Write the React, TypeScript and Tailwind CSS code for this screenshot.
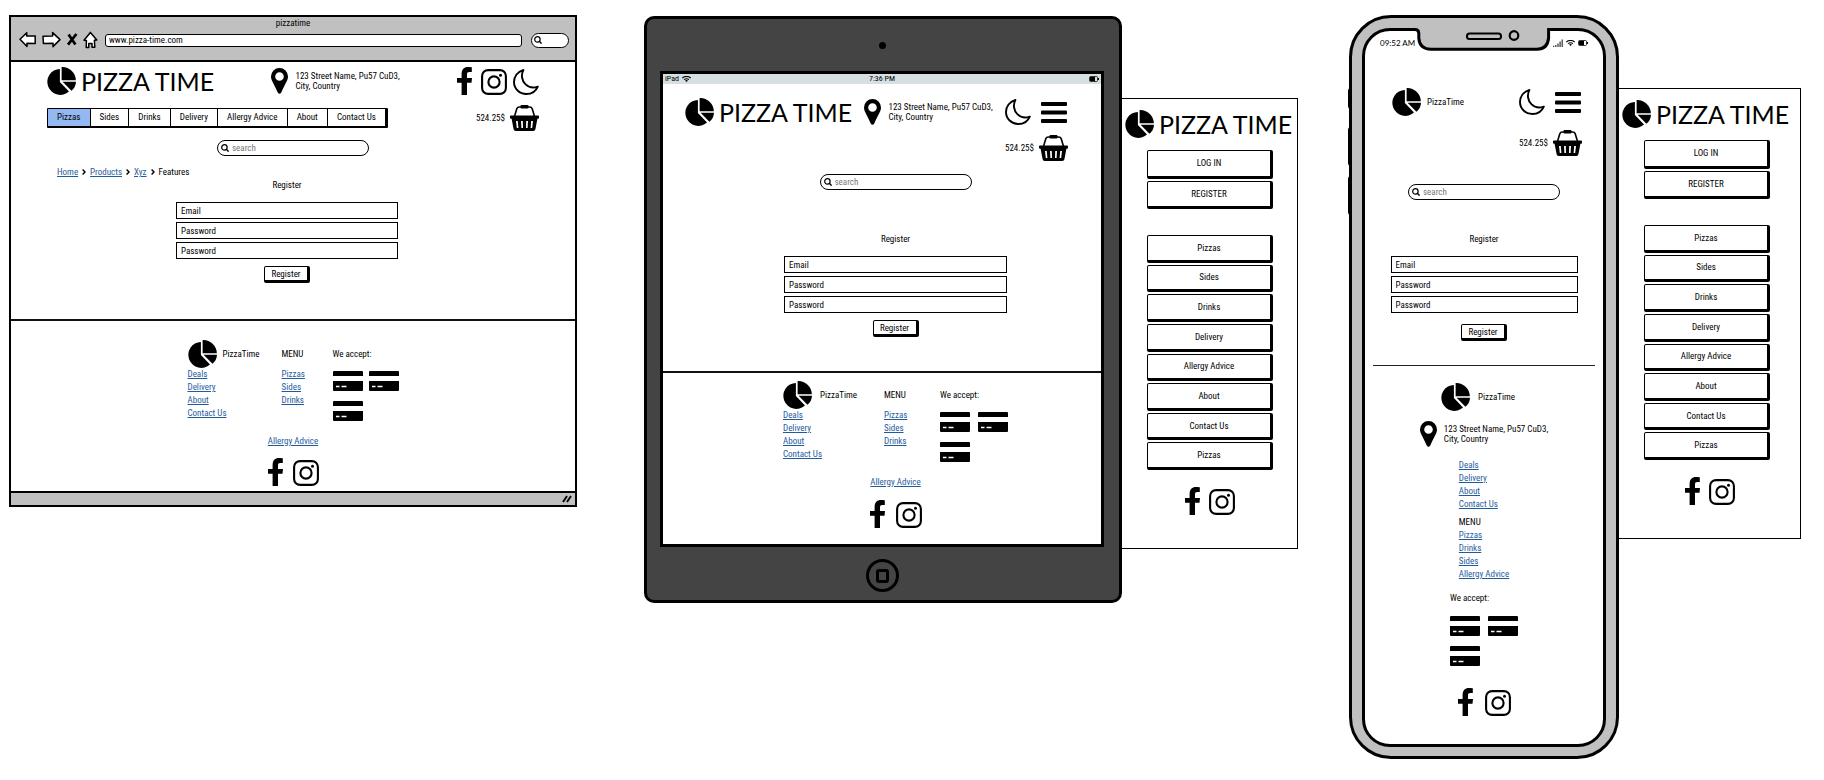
import React from "react";

type IconProps = { className?: string };

const PieIcon = ({ className = "" }: IconProps) => (
  <svg viewBox="0 0 29 28" className={`h-[28px] w-[29px] shrink-0 ${className}`} aria-hidden="true">
    <path d="M12.9 15V1.9A13 13 0 1 0 22 24.6Z" />
    <path d="M14.6 13.2V0A13.8 13.4 0 0 1 28.8 13.2Z" />
    <path d="M15.600 14.8H29A12 12 0 0 1 24.4 23.8Z" />
  </svg>
);

const PinIcon = () => (
  <svg viewBox="0 0 17 26" className="h-[26px] w-[17px] shrink-0" aria-hidden="true">
    <path
      fillRule="evenodd"
      d="M8.5 0A8.5 8.5 0 0 0 0 8.5C0 12.5 3 15.5 6.6 24.2Q8.5 27.4 10.4 24.2C14 15.5 17 12.5 17 8.5A8.5 8.5 0 0 0 8.5 0ZM8.5 4.2A4.3 4.3 0 1 1 8.5 12.8A4.3 4.3 0 1 1 8.5 4.2Z"
    />
  </svg>
);

const FacebookIcon = () => (
  <svg viewBox="0 0 15 28" className="h-[28px] w-[15px] shrink-0" aria-hidden="true">
    <path d="M4.6 28V15.8H0V11H4.6V7.2C4.6 2.4 7 .1 11 .1Q13.6 0 14.8.3V5H12.4C10.4 5 10 5.8 10 7.6V11H15L14.5 15.8H10V28Z" />
  </svg>
);

const InstagramIcon = () => (
  <svg viewBox="0 0 26 26" className="h-[26px] w-[26px] shrink-0" aria-hidden="true">
    <rect x="1.1" y="1.1" width="23.8" height="23.8" rx="6" fill="none" stroke="black" strokeWidth="2.1" />
    <circle cx="13" cy="13" r="5.6" fill="none" stroke="black" strokeWidth="2.1" />
    <circle cx="19.5" cy="6.3" r="1.5" />
  </svg>
);

const MoonIcon = () => (
  <svg viewBox="0 0 26 26" className="h-[26px] w-[26px] shrink-0" aria-hidden="true">
    <path
      d="M10.4 1C4.6 2.8 1 7.6 1 13C1 19.8 6.5 25 13.4 25C18.6 25 22.8 22.4 24.8 17.6C20.6 19.2 16 18.6 12.6 15.4C8.6 11.6 7.9 5.6 10.4 1Z"
      fill="none"
      stroke="black"
      strokeWidth="1.9"
      strokeLinejoin="round"
    />
  </svg>
);

const BasketIcon = () => (
  <svg viewBox="0 0 29 26" className="h-[26px] w-[29px] shrink-0" aria-hidden="true">
    <path d="M4.6 11L6.8 3.8Q7.4 2 9.4 2H19.6Q21.6 2 22.2 3.8L24.4 11" fill="none" stroke="black" strokeWidth="1.6" />
    <rect x="10.5" y="0" width="8" height="3.4" rx="1" />
    <path
      fillRule="evenodd"
      d="M.8 10.6H28.2Q29 10.6 29 11.6V12.6Q29 13.8 28 13.8H27.4L25.4 24.2Q25 26 23.4 26H5.6Q4 26 3.6 24.2L1.6 13.8H1Q0 13.8 0 12.6V11.6Q0 10.6 .8 10.6ZM6 16L6.8 23H8.4L7.8 16ZM11 16L11.4 23H13L12.8 16ZM16.2 16L16 23H17.6L18 16ZM21.2 16L20.6 23H22.2L23 16Z"
    />
  </svg>
);

const MenuIcon = () => (
  <svg viewBox="0 0 26 21" className="h-[21px] w-[26px] shrink-0" aria-hidden="true">
    <rect width="26" height="4" rx="1" />
    <rect y="8.5" width="26" height="4" rx="1" />
    <rect y="17" width="26" height="4" rx="1" />
  </svg>
);

const SearchIcon = ({ className = "" }: IconProps) => (
  <svg viewBox="0 0 8 8" className={`h-[8px] w-[8px] shrink-0 ${className}`} aria-hidden="true">
    <circle cx="3.4" cy="3.4" r="2.7" fill="none" stroke="black" strokeWidth="1.2" />
    <path d="M5.3 5.3L7.6 7.6" stroke="black" strokeWidth="1.4" />
  </svg>
);

const CardIcon = () => (
  <svg viewBox="0 0 30 20" className="h-[20px] w-[30px] shrink-0" aria-hidden="true">
    <path d="M1 0H29Q30 0 30 1V5H0V1Q0 0 1 0Z" />
    <path d="M0 10H30V19Q30 20 29 20H1Q0 20 0 19Z" />
    <path d="M3 15.5H6.5M8.5 15.5H13.5" stroke="white" strokeWidth="1.3" />
  </svg>
);

const WifiIcon = ({ className = "" }: IconProps) => (
  <svg viewBox="0 0 9 6" className={`h-[6px] w-[9px] ${className}`} aria-hidden="true">
    <path d="M.3 2Q4.5-1.2 8.7 2M2 3.6Q4.5 1.8 7 3.6" fill="none" stroke="black" strokeWidth="1.1" />
    <path d="M3 4.4Q4.5 3.6 6 4.4L4.5 6Z" />
  </svg>
);

const BatteryIcon = () => (
  <svg viewBox="0 0 10 6" className="h-[6px] w-[10px]" aria-hidden="true">
    <rect x=".5" y=".5" width="8" height="5" rx="1" fill="none" stroke="#222" strokeWidth=".9" />
    <rect x="1" y="1" width="5" height="4" />
    <rect x="9" y="2" width="1" height="2" />
  </svg>
);

const SignalIcon = () => (
  <svg viewBox="0 0 10 8" className="h-[8px] w-[10px]" aria-hidden="true">
    <path d="M.6 8V6.8M2.8 8V6M5 8V4.4M7.1 8V2.6M9.2 8V.4" stroke="#444" strokeWidth="1.3" />
  </svg>
);

const Wordmark = () => (
  <div className="flex items-center gap-[5px]">
    <PieIcon />
    <span className="whitespace-nowrap font-[Lato,sans-serif] text-[25px] leading-[28px]">PIZZA TIME</span>
  </div>
);

const SmallLogo = ({ className = "gap-[8px]" }: IconProps) => (
  <div className={`flex h-[28px] items-center ${className}`}>
    <PieIcon />
    <span>PizzaTime</span>
  </div>
);

const Address = () => (
  <address className="flex items-center gap-[7px] not-italic">
    <PinIcon />
    <span className="whitespace-nowrap leading-[10px]">
      123 Street Name, Pu57 CuD3,
      <br />
      City, Country
    </span>
  </address>
);

const Cart = () => (
  <div className="flex items-center gap-[5px]">
    <span>524.25$</span>
    <button type="button" aria-label="Basket">
      <BasketIcon />
    </button>
  </div>
);

const IconButton = ({ label, children }: { label: string; children: React.ReactNode }) => (
  <button type="button" aria-label={label}>
    {children}
  </button>
);

const Social = ({ className = "gap-[10px]" }: IconProps) => (
  <div className={`flex h-[28px] items-end justify-center ${className}`}>
    <a href="#facebook" aria-label="Facebook">
      <FacebookIcon />
    </a>
    <a href="#instagram" aria-label="Instagram">
      <InstagramIcon />
    </a>
  </div>
);

const SearchBox = ({ className = "" }: IconProps) => (
  <label
    className={`mx-auto flex h-[16px] w-[152px] items-center gap-[3px] rounded-full border border-black pl-[3px] ${className}`}
  >
    <SearchIcon />
    <input
      type="search"
      aria-label="search"
      placeholder="search"
      className="h-[12px] w-full min-w-0 rounded-full bg-transparent outline-none placeholder:text-[#777]"
    />
  </label>
);

const fields = [
  { type: "email", name: "Email" },
  { type: "password", name: "Password" },
  { type: "password", name: "Password" },
];

const RegisterForm = ({ className = "", buttonClass = "mt-[7px]" }: { className?: string; buttonClass?: string }) => (
  <form className={`mx-auto flex flex-col items-center ${className}`}>
    <h2 className="mb-[11px]">Register</h2>
    <div className="flex w-full flex-col gap-[3px]">
      {fields.map((f, i) => (
        <input
          key={i}
          type={f.type}
          aria-label={f.name}
          placeholder={f.name}
          className="h-[17px] w-full border border-black bg-white px-[4px] outline-none placeholder:text-black"
        />
      ))}
    </div>
    <button
      type="button"
      className={`h-[17px] w-[46px] rounded-[2px] border border-r-[3px] border-b-[3px] border-black bg-white leading-[12px] ${buttonClass}`}
    >
      Register
    </button>
  </form>
);

const Links = ({ items }: { items: string[] }) => (
  <ul className="leading-[13px] text-[#1f5c9e]">
    {items.map((t) => (
      <li key={t}>
        <a href="#" className="underline">
          {t}
        </a>
      </li>
    ))}
  </ul>
);

const Cards = ({ className = "gap-x-[6px]" }: IconProps) => (
  <div className={`grid grid-cols-[30px_30px] gap-y-[10px] ${className}`}>
    <CardIcon />
    <CardIcon />
    <CardIcon />
  </div>
);

const companyLinks = ["Deals", "Delivery", "About", "Contact Us"];

const WideFooter = ({ columns, cardGap, logoGap }: { columns: string; cardGap: string; logoGap: string }) => (
  <>
    <div className={`mx-auto grid w-fit ${columns}`}>
      <div>
        <SmallLogo className={logoGap} />
        <Links items={companyLinks} />
      </div>
      <div>
        <h3 className="leading-[28px]">MENU</h3>
        <Links items={["Pizzas", "Sides", "Drinks"]} />
      </div>
      <div>
        <h3 className="mb-[3px] leading-[28px]">We accept:</h3>
        <Cards className={cardGap} />
      </div>
    </div>
    <p className="mt-[14px] text-center">
      <a href="#" className="text-[#1f5c9e] underline">
        Allergy Advice
      </a>
    </p>
  </>
);

const tabs = ["Pizzas", "Sides", "Drinks", "Delivery", "Allergy Advice", "About", "Contact Us"];

const DesktopWindow = () => (
  <section className="mt-[15px] ml-[9px] flex min-w-0 flex-[564_1_0%] flex-col border-2 border-black">
    <header className="border-b-2 border-black bg-[#c0c0c0] pb-[11px]">
      <p className="text-center">pizzatime</p>
      <div className="mt-[2px] flex h-[18px] items-center pr-[6px] pl-[8px]">
        <svg viewBox="0 0 82 18" className="h-[18px] w-[82px] shrink-0" aria-hidden="true">
          <g fill="white" stroke="black" strokeWidth="1.5" strokeLinejoin="round">
            <path d="M1 8.2L7.8 1.8L7.6 5H16.2V12.4L8 12.2V15.4Z" />
            <path d="M41 8.6L34 15.6V12.2L24.4 12.4L24 5.2L33.6 5V1.6Z" />
            <path d="M65 9.2L71.4 1.4L77.8 9L75.4 9.2L75.8 16.2H73V12.6H69.8V16.4H67.2L67.4 9.4Z" />
          </g>
          <path d="M49.6 3.4L56.4 13.4M57.4 3L49 13.6" stroke="black" strokeWidth="2.7" />
        </svg>
        <input
          aria-label="Address"
          defaultValue="www.pizza-time.com"
          className="ml-[4px] h-[13px] min-w-0 flex-1 rounded-[3px] border border-black bg-white px-[3px] outline-none"
        />
        <label className="ml-[9px] flex h-[15px] w-[38px] items-center rounded-[8px] border border-black bg-white pl-[2px]">
          <SearchIcon />
          <input aria-label="Browser search" className="w-full min-w-0 bg-transparent outline-none" />
        </label>
      </div>
    </header>
    <main className="pt-[5px] pb-[36px]">
      <div className="flex h-[28px] items-center justify-between px-[36px]">
        <Wordmark />
        <Address />
        <div className="flex items-end gap-[6px]">
          <Social className="gap-[9px]" />
          <IconButton label="Dark mode">
            <MoonIcon />
          </IconButton>
        </div>
      </div>
      <div className="mt-[10px] flex items-center justify-between px-[36px]">
        <nav className="flex h-[20px] w-[341px] rounded-[1px] border border-r-[3px] border-b-2 border-black text-center">
          {tabs.map((t, i) => (
            <a
              key={t}
              href="#"
              className={`flex-auto border-r border-black px-[8px] leading-[17px] whitespace-nowrap last:border-r-0 ${i === 0 ? "bg-[#94b9f2]" : "bg-white"}`}
            >
              {t}
            </a>
          ))}
        </nav>
        <Cart />
      </div>
      <SearchBox className="mt-[9px]" />
      <nav className="mt-[10px] flex items-center gap-[4px] pl-[46px]">
        {["Home", "Products", "Xyz"].map((t) => (
          <React.Fragment key={t}>
            <a href="#" className="text-[#1f5c9e] underline">
              {t}
            </a>
            <svg viewBox="0 0 4 6" className="h-[6px] w-[4px]" aria-hidden="true">
              <path d="M.6.5L3 3L.6 5.5" fill="none" stroke="black" strokeWidth="1.4" />
            </svg>
          </React.Fragment>
        ))}
        <span>Features</span>
      </nav>
      <div className="mt-px pr-[12px]">
        <RegisterForm className="w-[222px]" />
      </div>
    </main>
    <footer className="border-t-2 border-[#111] pt-[19px] pb-[5px]">
      <WideFooter columns="grid-cols-[94px_51px_66px]" cardGap="gap-x-[6px]" logoGap="gap-[6px]" />
      <Social className="mt-[11px] gap-[10px]" />
    </footer>
    <div className="flex h-[14px] items-center justify-end border-t-2 border-black bg-[#c0c0c0] pr-[3px]">
      <svg viewBox="0 0 10 8" className="h-[8px] w-[10px]" aria-hidden="true">
        <path d="M1 7L5 1M5 7L9 1" stroke="black" strokeWidth="1.9" />
      </svg>
    </div>
  </section>
);

const DrawerButtons = ({ items }: { items: string[] }) =>
  items.map((t, i) => (
    <button
      key={i}
      type="button"
      className="min-h-0 rounded-[2px] border border-r-[3px] border-b-[3px] border-black bg-white"
    >
      {t}
    </button>
  ));

const Drawer = ({ className = "" }: IconProps) => (
  <aside className={`self-start border border-l-0 border-black pt-[11px] pb-[33px] ${className}`}>
    <div className="pl-[3px]">
      <Wordmark />
    </div>
    <nav className="ml-[25px] w-[126px]">
      <div className="mt-[12px] grid h-[59px] auto-rows-fr gap-[2px]">
        <DrawerButtons items={["LOG IN", "REGISTER"]} />
      </div>
      <div className="mt-[26px] grid h-[235px] auto-rows-fr gap-[2px]">
        <DrawerButtons
          items={["Pizzas", "Sides", "Drinks", "Delivery", "Allergy Advice", "About", "Contact Us", "Pizzas"]}
        />
      </div>
    </nav>
    <Social className="mt-[17px] gap-[9px]" />
  </aside>
);

const Tablet = () => (
  <section className="mt-[16px] ml-[67px] flex min-w-0 flex-[654_1_0%] items-start">
    <div className="min-w-0 flex-[478_1_0%] rounded-[10px] border-3 border-black bg-[#444] pr-[15px] pl-[13px]">
      <div className="flex h-[52px] items-center justify-center">
        <div className="h-[7px] w-[7px] rounded-full bg-black" />
      </div>
      <div className="border-3 border-black bg-white">
        <div className="grid h-[10px] grid-cols-3 items-center bg-[#d6dfe2] px-[2px] text-[8px] leading-[10px]">
          <span className="flex items-center gap-[3px]">
            iPad <WifiIcon />
          </span>
          <span className="text-center">7:36 PM</span>
          <span className="flex justify-end">
            <BatteryIcon />
          </span>
        </div>
        <main className="pt-[14px] pb-[34px]">
          <div className="flex h-[28px] items-center justify-between pr-[34px] pl-[22px]">
            <Wordmark />
            <Address />
            <div className="flex items-center gap-[10px]">
              <IconButton label="Dark mode">
                <MoonIcon />
              </IconButton>
              <IconButton label="Menu">
                <MenuIcon />
              </IconButton>
            </div>
          </div>
          <div className="mt-[9px] flex justify-end pr-[33px]">
            <Cart />
          </div>
          <div className="pl-[27px]">
            <SearchBox className="mt-[13px]" />
            <RegisterForm className="mt-[43px] w-[223px]" />
          </div>
        </main>
        <footer className="border-t-2 border-[#111] pt-[8px] pb-[16px] pl-[27px]">
          <WideFooter columns="grid-cols-[101px_56px_68px]" cardGap="gap-x-[8px]" logoGap="gap-[8px]" />
          <Social className="mt-[12px] gap-[11px]" />
        </footer>
      </div>
      <div className="flex h-[53px] items-center justify-center pt-[4px]">
        <button
          type="button"
          aria-label="Home"
          className="flex h-[33px] w-[33px] items-center justify-center rounded-full border-3 border-black"
        >
          <span className="h-[14px] w-[13px] rounded-[3px] border-3 border-black" />
        </button>
      </div>
    </div>
    <Drawer className="mt-[82px] w-[176px]" />
  </section>
);

const Phone = () => (
  <section className="mt-[15px] mr-[23px] ml-[51px] flex min-w-0 flex-[452_1_0%] items-start">
    <div className="relative min-w-0 flex-[270_1_0%] rounded-[42px] border-3 border-black bg-[#c0c0c0] px-[10px] pt-[10px] pb-[9px]">
      <div className="absolute top-[70px] -left-[4px] h-[21px] w-[3px] rounded-l bg-black" />
      <div className="absolute top-[109px] -left-[4px] h-[39px] w-[3px] rounded-l bg-black" />
      <div className="absolute top-[158px] -left-[4px] h-[39px] w-[3px] rounded-l bg-black" />
      <div className="relative rounded-[28px] border-3 border-black bg-white pb-[28px]">
        <svg
          viewBox="0 0 138 24"
          className="absolute -top-[3px] left-1/2 h-[24px] w-[138px] -translate-x-1/2"
          aria-hidden="true"
        >
          <path d="M0 0H138V3H0Z" fill="#c0c0c0" />
          <path
            d="M0 1.5Q3.5 1.5 3.8 5V10Q4.5 21.2 16 21.2H122Q132.500 21.2 133.600 10V1.500H138"
            fill="#c0c0c0"
            stroke="black"
            strokeWidth="3"
          />
          <path d="M5.500 0H132V4H5.500Z" fill="#c0c0c0" />
          <rect x="52" y="5.500" width="34" height="5.500" rx="2.500" fill="#c0c0c0" stroke="black" strokeWidth="2" />
          <circle cx="99" cy="7.500" r="4.300" fill="#c0c0c0" stroke="black" strokeWidth="2.200" />
        </svg>
        <div className="flex h-[24px] items-center justify-between pr-[15px] pl-[15px] font-[Lato,sans-serif] text-[8px]">
          <span>09:52 AM</span>
          <span className="flex items-center gap-[3px]">
            <SignalIcon />
            <WifiIcon />
            <BatteryIcon />
          </span>
        </div>
        <div className="mt-[33px] flex h-[28px] items-center justify-between pr-[22px] pl-[27px]">
          <SmallLogo className="gap-[6px]" />
          <div className="flex items-center gap-[10px]">
            <IconButton label="Dark mode">
              <MoonIcon />
            </IconButton>
            <IconButton label="Menu">
              <MenuIcon />
            </IconButton>
          </div>
        </div>
        <div className="mt-[14px] flex justify-end pr-[21px]">
          <Cart />
        </div>
        <SearchBox className="mt-[28px]" />
        <RegisterForm className="mt-[33px] w-[187px]" buttonClass="mt-[11px]" />
        <hr className="mx-[8px] mt-[24px] border-[#222]" />
        <footer className="flex flex-col items-center pt-[17px]">
          <div className="pr-[12px]">
            <SmallLogo />
          </div>
          <div className="mt-[10px]">
            <Address />
          </div>
          <div className="mt-[12px]">
            <Links items={companyLinks} />
            <h3 className="mt-[5px] mb-px">MENU</h3>
            <Links items={["Pizzas", "Drinks", "Sides", "Allergy Advice"]} />
          </div>
          <div className="mt-[11px]">
            <h3 className="mb-[12px]">We accept:</h3>
            <Cards className="gap-x-[8px]" />
          </div>
          <Social className="mt-[22px] gap-[12px]" />
        </footer>
      </div>
    </div>
    <Drawer className="mt-[73px] w-[182px]" />
  </section>
);

export default function App() {
  return (
    <div className="flex min-h-screen items-start bg-white pb-[22px] font-['Roboto_Condensed',Lato,sans-serif] text-[9px] leading-[12px] text-black">
      <DesktopWindow />
      <Tablet />
      <Phone />
    </div>
  );
}
